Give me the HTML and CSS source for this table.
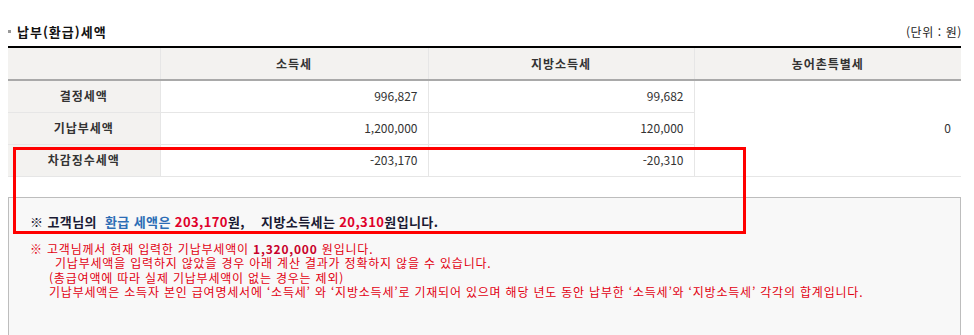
FILE: index.html
```html
<!DOCTYPE html>
<html lang="ko">
<head>
<meta charset="utf-8">
<link rel="stylesheet" href="styles.css">
</head>
<body>
<div class="page">
  <div class="title-row">
    <h2 class="title"><span class="bullet"></span>납부(환급)세액</h2>
    <span class="unit">(단위 : 원)</span>
  </div>
  <table class="tax">
    <colgroup>
      <col class="c1"><col class="c2"><col class="c3"><col class="c4">
    </colgroup>
    <thead>
      <tr><th></th><th>소득세</th><th>지방소득세</th><th>농어촌특별세</th></tr>
    </thead>
    <tbody>
      <tr><th>결정세액</th><td>996,827</td><td>99,682</td><td rowspan="3" class="zero">0</td></tr>
      <tr><th>기납부세액</th><td>1,200,000</td><td>120,000</td></tr>
      <tr><th>차감징수세액</th><td>-203,170</td><td>-20,310</td></tr>
    </tbody>
  </table>
  <div class="notice">
    <p class="summary">※ 고객님의&nbsp; <span class="blue">환급 세액은</span> <span class="red">203,170</span>원,&nbsp;&nbsp;&nbsp; 지방소득세는 <span class="red">20,310</span>원입니다.</p>
    <div class="notes">
      <p>※ 고객님께서 현재 입력한 기납부세액이 <b>1,320,000</b> 원입니다.</p>
      <p class="ind2">기납부세액을 입력하지 않았을 경우 아래 계산 결과가 정확하지 않을 수 있습니다.</p>
      <p class="ind1">(총급여액에 따라 실제 기납부세액이 없는 경우는 제외)</p>
      <p class="ind1">기납부세액은 소득자 본인 급여명세서에 ‘소득세’ 와 ‘지방소득세’로 기재되어 있으며 해당 년도 동안 납부한 ‘소득세’와 ‘지방소득세’ 각각의 합계입니다.</p>
    </div>
  </div>
  <div class="highlight"></div>
</div>
</body>
</html>
```
FILE: styles.css
```css
* { box-sizing: border-box; }
html, body { margin: 0; padding: 0; background: #fff; }
body {
  font-family: "Noto Sans CJK KR", "Noto Sans", sans-serif;
  font-size: 12px;
  color: #333;
}
.page {
  position: relative;
  padding: 0 13px 0 8px;
  width: 974px;
}
.title-row {
  display: flex;
  justify-content: space-between;
  align-items: center;
  height: 46px;
  padding-top: 16px;
}
.title {
  margin: 0;
  font-size: 13px;
  font-weight: bold;
  color: #111;
  display: flex;
  align-items: center;
  letter-spacing: 1px;
}
.bullet {
  display: inline-block;
  width: 3px;
  height: 3px;
  background: #999;
  margin-right: 6px;
}
.unit {
  font-size: 12px;
  color: #222;
  letter-spacing: 0.6px;
  margin-right: -1px;
}
.tax {
  width: 953px;
  border-collapse: collapse;
  table-layout: fixed;
  border-top: 2px solid #000;
}
.c1 { width: 152px; }
.c2 { width: 268px; }
.c3 { width: 266px; }
.c4 { width: 267px; }
.tax th, .tax td {
  height: 32px;
  padding: 0 10px;
  border: 1px solid #e6e6e6;
  font-size: 12px;
  line-height: 16px;
}
.tax tr > :first-child { border-left: none; }
.tax tr > :last-child { border-right: none; }
.tax th { letter-spacing: 1px; }
.tax thead th {
  background: #f3f2f0;
  color: #333;
  font-weight: bold;
  text-align: center;
  border-top: none;
  border-bottom: 2px solid #a9a9a9;
  height: 33px;
}
.tax tbody th {
  background: #f3f2f0;
  font-weight: bold;
  color: #333;
  text-align: center;
}
.tax td {
  text-align: right;
  color: #333;
}
.tax td.zero { vertical-align: middle; }
.notice {
  margin-top: 20px;
  width: 953px;
  min-height: 150px;
  background: #f8f8f8;
  border: 1px solid #bdbdbd;
  padding: 15px 0 0 21px;
}
.notice p { margin: 0; }
.summary {
  font-size: 13px;
  font-weight: bold;
  color: #1a1a33;
  line-height: 18px;
  letter-spacing: 0.4px;
}
.summary .blue { color: #2c6db5; }
.summary .red { color: #e0002a; }
.notes {
  margin-top: 11px;
  color: #e20012;
  font-size: 12px;
  line-height: 14.5px;
  letter-spacing: 0.8px;
}
.notes b { color: #c8002a; }
.notes .ind2 { padding-left: 25px; }
.notes .ind1 { padding-left: 19px; }
.highlight {
  position: absolute;
  left: 13px;
  top: 147px;
  width: 733px;
  height: 87px;
  border: 3px solid #ff0000;
}
```
